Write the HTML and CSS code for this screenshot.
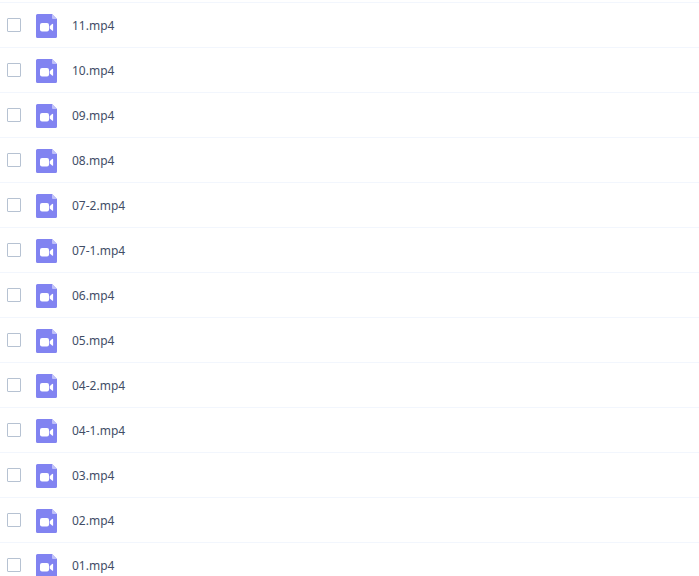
FILE: index.html
```html
<!DOCTYPE html>
<html lang="en">
<head>
    <meta charset="UTF-8">
    <title>Files</title>
    <link rel="stylesheet" href="styles.css">
</head>
<body>
<svg class="sprite" width="0" height="0">
    <symbol id="video" viewBox="0 0 21 24">
        <path fill="#8183f1" d="M1.5 0H16l5 5v17.5a1.5 1.5 0 0 1-1.5 1.5h-18A1.5 1.5 0 0 1 0 22.500v-21A1.500 1.500 0 0 1 1.500 0z"/>
        <path fill="#c0c1f8" d="M16 0l5 5h-4a1 1 0 0 1-1-1z"/>
        <rect fill="#fff" x="4" y="9" width="9" height="8.500" rx="2"/>
        <path fill="#fff" d="M13.700 12.200l2.400-2.200q1-.6 1 .4v5.800q0 1-1 .4l-2.400-2.200z"/>
    </symbol>
</svg>
<ul class="list" id="list"></ul>
<script>
    var names = ["11", "10", "09", "08", "07-2", "07-1", "06", "05", "04-2", "04-1", "03", "02", "01"];
    var list = document.getElementById("list");
    for (var i = 0; i < names.length; i++) {
        var li = document.createElement("li");
        li.innerHTML = '<input type="checkbox" id="f' + i + '">' +
            '<label for="f' + i + '"><svg class="icon"><use href="#video"/></svg>' +
            '<span>' + names[i] + '.mp4</span></label>';
        list.appendChild(li);
    }
</script>
</body>
</html>
```

FILE: styles.css
```css
*{
    margin: 0;
    padding: 0;
    box-sizing: border-box;
}
body{
    background: #fff;
    color: #424e67;
    font: 12px/18px "Noto Sans", "Open Sans", sans-serif;
    overflow: hidden;
}
.sprite{
    display: block;
}
.list{
    padding-top: 2px;
    list-style: none;
}
.list li{
    display: flex;
    align-items: center;
    height: 45px;
    padding: 0 7px;
    border-top: 1px solid #f2f6fd;
}
.list input{
    appearance: none;
    width: 14px;
    height: 14px;
    border: 1px solid #b6c2d2;
    border-radius: 1px;
    background: #fff;
}
.list label{
    display: flex;
    align-items: center;
    gap: 15px;
    margin-left: 15px;
    padding-top: 2px;
}
.icon{
    width: 21px;
    height: 24px;
}
```
